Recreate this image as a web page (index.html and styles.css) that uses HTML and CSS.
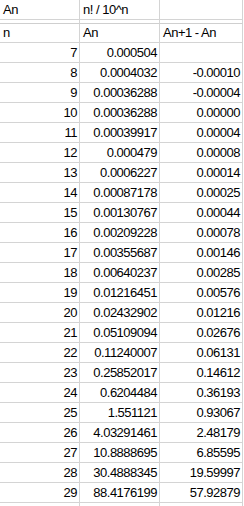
FILE: index.html
```html
<!DOCTYPE html>
<html>
<head>
<meta charset="utf-8">
<link rel="stylesheet" href="styles.css">
</head>
<body>
<div class="sheet">
  <div class="c t1">An</div><div class="c t1">n! / 10^n</div><div class="c t1"></div>
  <div class="c gap"></div><div class="c gap"></div><div class="c gap"></div>
  <div class="c t2">n</div><div class="c t2">An</div><div class="c t2">An+1 - An</div>
  <div class="c r">7</div><div class="c r">0.000504</div><div class="c r"></div>
  <div class="c r">8</div><div class="c r">0.0004032</div><div class="c r">-0.00010</div>
  <div class="c r">9</div><div class="c r">0.00036288</div><div class="c r">-0.00004</div>
  <div class="c r">10</div><div class="c r">0.00036288</div><div class="c r">0.00000</div>
  <div class="c r">11</div><div class="c r">0.00039917</div><div class="c r">0.00004</div>
  <div class="c r">12</div><div class="c r">0.000479</div><div class="c r">0.00008</div>
  <div class="c r">13</div><div class="c r">0.0006227</div><div class="c r">0.00014</div>
  <div class="c r">14</div><div class="c r">0.00087178</div><div class="c r">0.00025</div>
  <div class="c r">15</div><div class="c r">0.00130767</div><div class="c r">0.00044</div>
  <div class="c r">16</div><div class="c r">0.00209228</div><div class="c r">0.00078</div>
  <div class="c r">17</div><div class="c r">0.00355687</div><div class="c r">0.00146</div>
  <div class="c r">18</div><div class="c r">0.00640237</div><div class="c r">0.00285</div>
  <div class="c r">19</div><div class="c r">0.01216451</div><div class="c r">0.00576</div>
  <div class="c r">20</div><div class="c r">0.02432902</div><div class="c r">0.01216</div>
  <div class="c r">21</div><div class="c r">0.05109094</div><div class="c r">0.02676</div>
  <div class="c r">22</div><div class="c r">0.11240007</div><div class="c r">0.06131</div>
  <div class="c r">23</div><div class="c r">0.25852017</div><div class="c r">0.14612</div>
  <div class="c r">24</div><div class="c r">0.6204484</div><div class="c r">0.36193</div>
  <div class="c r">25</div><div class="c r">1.551121</div><div class="c r">0.93067</div>
  <div class="c r">26</div><div class="c r">4.03291461</div><div class="c r">2.48179</div>
  <div class="c r">27</div><div class="c r">10.8888695</div><div class="c r">6.85595</div>
  <div class="c r">28</div><div class="c r">30.4888345</div><div class="c r">19.59997</div>
  <div class="c r">29</div><div class="c r">88.4176199</div><div class="c r">57.92879</div>
  <div class="c r"></div><div class="c r"></div><div class="c r"></div>
</div>
</body>
</html>
```
FILE: styles.css
```css
html, body {
  margin: 0;
  padding: 0;
  background: #ffffff;
  overflow: hidden;
}
.sheet {
  display: grid;
  grid-template-columns: 80px 80px 83px;
  font-family: "Liberation Sans", Arial, sans-serif;
  font-size: 13px;
  letter-spacing: -0.5px;
  color: #000000;
}
.c {
  box-sizing: border-box;
  border-right: 1px solid #d4d4d4;
  border-bottom: 1px solid #d4d4d4;
  height: 20px;
  line-height: 19px;
  padding: 0 2px 0 2px;
  white-space: nowrap;
  overflow: hidden;
}
.t1 {
  height: 20px;
  line-height: 19px;
  padding-left: 3px;
}
.gap {
  height: 4px;
  border-bottom-color: #cfcfcf;
}
.t2 {
  height: 19px;
  line-height: 18px;
  padding-left: 3px;
}
.r {
  text-align: right;
  padding-right: 2px;
}
```
